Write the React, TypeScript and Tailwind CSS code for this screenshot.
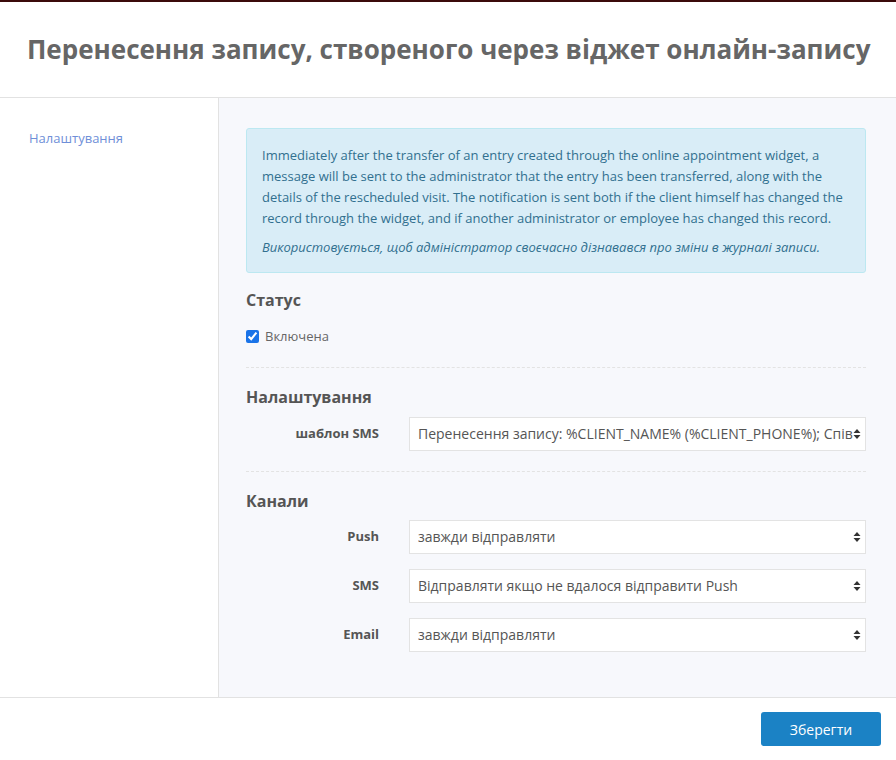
import React from 'react';

const font = { fontFamily: '"Open Sans", "Noto Sans", sans-serif' };

function Arrows() {
  return (
    <svg width="8" height="12" viewBox="0 0 8 12" className="shrink-0">
      <path d="M4 1 L7.5 5 L0.5 5 Z" fill="#333" />
      <path d="M4 11 L7.5 7 L0.5 7 Z" fill="#333" />
    </svg>
  );
}

function SelectRow({ label, value }: { label: string; value: string }) {
  return (
    <div className="flex items-center">
      <div className="w-[163px] shrink-0 pr-[30px] text-right text-[13px] font-bold text-[#555]">{label}</div>
      <div className="flex h-[34px] min-w-0 flex-1 items-center overflow-hidden border border-[#e3e3e3] bg-white pl-[8px] pr-[4px]">
        <span className="min-w-0 flex-1 overflow-hidden whitespace-nowrap text-[14px] text-[#555]">{value}</span>
        <Arrows />
      </div>
    </div>
  );
}

export default function App() {
  return (
    <div className="flex h-[760px] flex-col bg-white" style={font}>
      <div className="h-[2px] bg-[#3b0a0a]" />
      <header className="flex h-[96px] items-center border-b border-[#e2e2e2] px-[27px]">
        <h1 className="whitespace-nowrap text-[26px] font-bold text-[#666]">
          Перенесення запису, створеного через віджет онлайн-запису
        </h1>
      </header>
      <div className="flex min-h-0 flex-1">
        <aside className="w-[219px] shrink-0 border-r border-[#e2e2e2] px-[29px] pt-[27px]">
          <a className="text-[13px] text-[#6f8fd8]">Налаштування</a>
        </aside>
        <main className="min-w-0 flex-1 bg-[#f7f8fc] pl-[27px] pr-[30px] pt-[30px]">
          <div className="rounded-[3px] border border-[#bce8f1] bg-[#d9edf7] px-[15px] pb-[14px] pt-[16px] text-[13px] leading-[21px] text-[#31708f]">
            <p className="whitespace-nowrap">
              Immediately after the transfer of an entry created through the online appointment widget, a
              <br />
              message will be sent to the administrator that the entry has been transferred, along with the
              <br />
              details of the rescheduled visit. The notification is sent both if the client himself has changed the
              <br />
              record through the widget, and if another administrator or employee has changed this record.
            </p>
            <p className="mt-[8px] italic">
              Використовується, щоб адміністратор своєчасно дізнавався про зміни в журналі записи.
            </p>
          </div>

          <h3 className="mt-[15px] text-[16px] font-bold text-[#555]">Статус</h3>
          <label className="mt-[15px] flex items-center gap-[6px] text-[13px] text-[#666]">
            <input type="checkbox" defaultChecked className="h-[13px] w-[13px] accent-[#1a73e8]" />
            Включена
          </label>
          <div className="mt-[20px] border-t border-dashed border-[#e3e3e3]" />

          <h3 className="mt-[17px] text-[16px] font-bold text-[#555]">Налаштування</h3>
          <div className="mt-[8px]">
            <SelectRow label="шаблон SMS" value="Перенесення запису: %CLIENT_NAME% (%CLIENT_PHONE%); Співробітник: %STAFF_NAME%" />
          </div>
          <div className="mt-[20px] border-t border-dashed border-[#e3e3e3]" />

          <h3 className="mt-[17px] text-[16px] font-bold text-[#555]">Канали</h3>
          <div className="mt-[7px] flex flex-col gap-[15px]">
            <SelectRow label="Push" value="завжди відправляти" />
            <SelectRow label="SMS" value="Відправляти якщо не вдалося відправити Push" />
            <SelectRow label="Email" value="завжди відправляти" />
          </div>
        </main>
      </div>
      <footer className="flex h-[63px] shrink-0 items-center justify-end border-t border-[#e2e2e2] pr-[15px]">
        <button className="h-[34px] w-[120px] rounded-[3px] bg-[#1b82c5] text-[14px] text-white">Зберегти</button>
      </footer>
    </div>
  );
}
